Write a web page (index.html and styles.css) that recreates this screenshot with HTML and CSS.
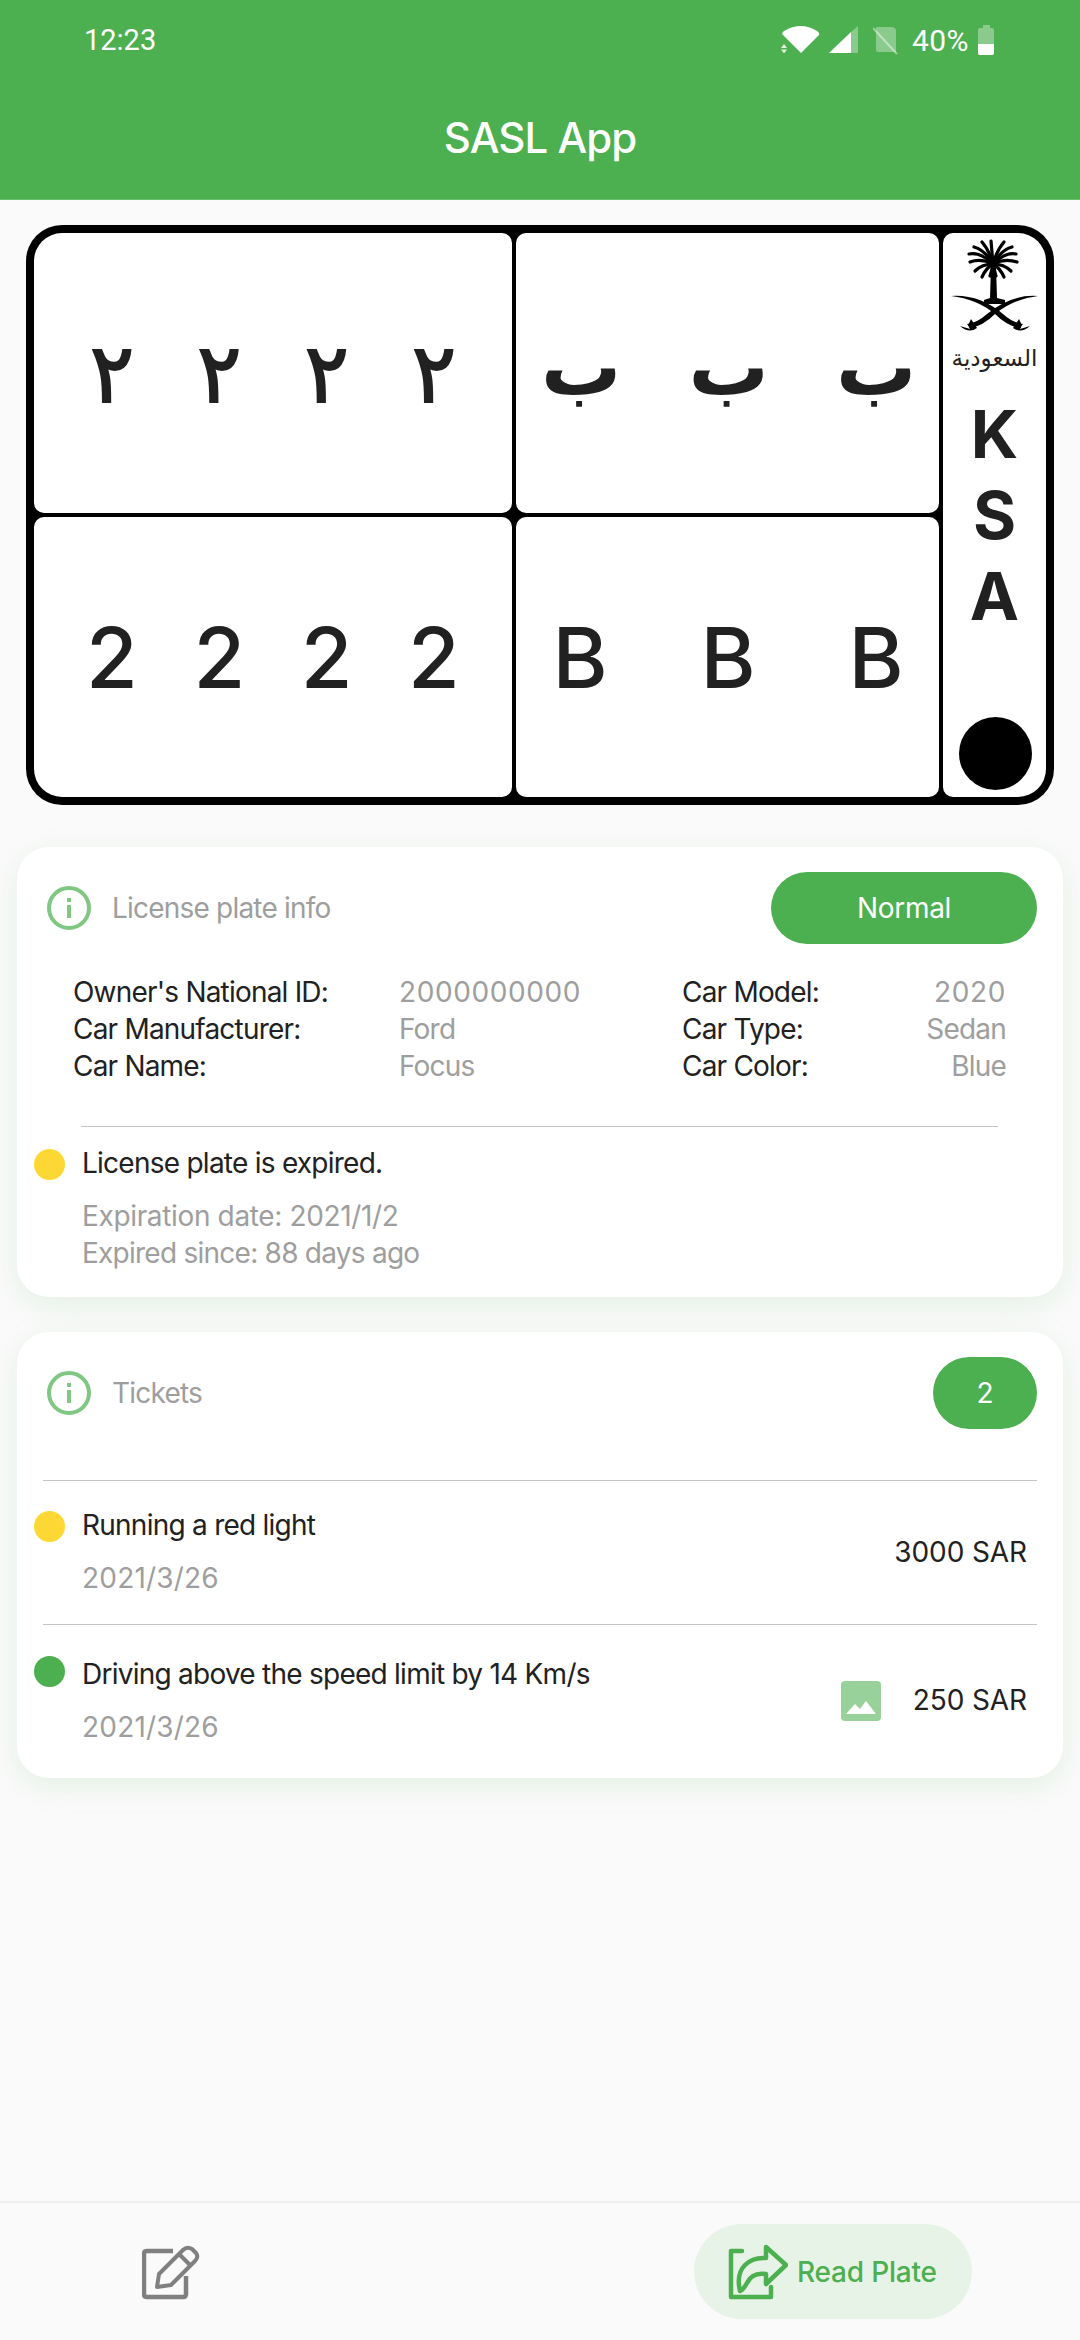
FILE: index.html

```html
<!DOCTYPE html>
<html lang="en">
<head>
  <meta charset="UTF-8">
  <title>SASL App</title>
  <link rel="stylesheet" href="styles.css">
</head>
<body>
  <div class="app">
    <header class="appbar">
      <div class="status">
        <span class="time">12:23</span>
        <div class="status-right">
          <svg class="st-wifi" width="40" height="30" viewBox="0 0 40 30">
            <path d="M20 28 L2 10 Q0 8 3 6 Q20 -4 36 6 Q39 8 38 10 Z" fill="#fff"/>
            <path d="M0 23 L3 19 L6 23 Z M0 24.500 L6 24.500 L3 28.500 Z" fill="#fff" opacity=".85"/>
          </svg>
          <svg class="st-signal" width="30" height="30" viewBox="0 0 30 30">
            <path d="M0 28 L22 7 L22 28 Z" fill="#fff"/>
            <path d="M22 7 L29 1 L29 28 L22 28 Z" fill="#fff" opacity=".35"/>
          </svg>
          <svg class="st-sim" width="26" height="30" viewBox="0 0 26 30">
            <path d="M3 2 L18 2 Q23 2 23 6 L23 27 L5 27 Q3 27 3 25 Z" fill="#fff" opacity=".35"/>
            <path d="M0 3 L24 29" stroke="#fff" stroke-width="2" opacity=".45"/>
          </svg>
          <span class="pct">40%</span>
          <div class="batt"><div class="batt-cap"></div><div class="batt-body"><div class="batt-level"></div></div></div>
        </div>
      </div>
      <h1 class="title">SASL App</h1>
    </header>

    <div class="plate">
      <div class="cell cell-num ar"><span>٢</span><span>٢</span><span>٢</span><span>٢</span></div>
      <div class="cell cell-let ar"><span>ب</span><span>ب</span><span>ب</span></div>
      <div class="side">
        <svg class="emblem" width="88" height="96" viewBox="0 0 88 96">
          <g stroke="#000" stroke-linecap="round" fill="none" stroke-width="3.200">
            <path d="M42 26 Q41 14 40 3"/>
            <path d="M42 26 Q38 12 31 4"/>
            <path d="M42 26 Q46 12 53 4"/>
            <path d="M42 26 Q34 12 23 9"/>
            <path d="M42 26 Q50 12 61 9"/>
            <path d="M42 26 Q30 14 18 16"/>
            <path d="M42 26 Q54 14 65 16"/>
            <path d="M42 26 Q30 20 19 24"/>
            <path d="M42 26 Q54 20 66 24"/>
            <path d="M42 26 Q31 26 24 33"/>
            <path d="M42 26 Q53 26 60 33"/>
            <path d="M42 26 Q35 30 31 39"/>
            <path d="M42 26 Q49 30 53 39"/>
            <path d="M42 26 Q41 32 39 38"/>
            <path d="M42 26 Q43 32 45 38"/>
          </g>
          <path d="M40 28 L45 28 L46 60 L54 62 L54 66 L33 66 L33 62 L39 60 Z" fill="#000"/>
          <path d="M0 58 Q28 56 52 76 Q62 85 72 86 L69 90 Q56 88 44 76 Q26 61 0 58 Z" fill="#000"/>
          <path d="M87 58 Q60 56 36 76 Q26 85 16 86 L19 90 Q32 88 44 76 Q62 61 87 58 Z" fill="#000"/>
          <path d="M68 81 Q72 88 69 91 L79 88 Q70 96 62 90 Z M20 81 Q16 88 19 91 L9 88 Q18 96 26 90 Z" fill="#000"/>
        </svg>
        <span class="saudi">السعودية</span>
        <div class="ksa"><span>K</span><span>S</span><span>A</span></div>
        <div class="dot-black"></div>
      </div>
      <div class="cell cell-num"><span>2</span><span>2</span><span>2</span><span>2</span></div>
      <div class="cell cell-let"><span>B</span><span>B</span><span>B</span></div>
    </div>

    <section class="card card-info">
      <div class="card-head">
        <svg class="info" width="46" height="46" viewBox="0 0 46 46">
          <circle cx="23" cy="23" r="20" fill="none" stroke="#81C784" stroke-width="4"/>
          <rect x="21" y="20" width="4" height="13" fill="#81C784"/>
          <rect x="21" y="13" width="4" height="4" fill="#81C784"/>
        </svg>
        <span class="head-label">License plate info</span>
        <span class="pill pill-normal">Normal</span>
      </div>
      <div class="details">
        <div class="col-left">
          <span class="k">Owner's National ID:</span><span class="v num">2000000000</span>
          <span class="k">Car Manufacturer:</span><span class="v">Ford</span>
          <span class="k">Car Name:</span><span class="v">Focus</span>
        </div>
        <div class="col-right">
          <span class="k">Car Model:</span><span class="v num">2020</span>
          <span class="k">Car Type:</span><span class="v">Sedan</span>
          <span class="k">Car Color:</span><span class="v">Blue</span>
        </div>
      </div>
      <div class="rule rule-info"></div>
      <div class="expired">
        <span class="dot yellow"></span>
        <div>
          <div class="main-txt">License plate is expired.</div>
          <div class="sub-txt exp-date">Expiration date: 2021/1/2</div>
          <div class="sub-txt exp-since">Expired since: 88 days ago</div>
        </div>
      </div>
    </section>

    <section class="card card-tickets">
      <div class="card-head">
        <svg class="info" width="46" height="46" viewBox="0 0 46 46">
          <circle cx="23" cy="23" r="20" fill="none" stroke="#81C784" stroke-width="4"/>
          <rect x="21" y="20" width="4" height="13" fill="#81C784"/>
          <rect x="21" y="13" width="4" height="4" fill="#81C784"/>
        </svg>
        <span class="head-label">Tickets</span>
        <span class="pill pill-count">2</span>
      </div>
      <div class="rule rule-t1"></div>
      <div class="ticket ticket-1">
        <span class="dot yellow"></span>
        <div class="ticket-txt">
          <div class="main-txt">Running a red light</div>
          <div class="sub-txt date">2021/3/26</div>
        </div>
        <span class="amount">3000 SAR</span>
      </div>
      <div class="rule rule-t2"></div>
      <div class="ticket ticket-2">
        <span class="dot green"></span>
        <div class="ticket-txt">
          <div class="main-txt">Driving above the speed limit by 14 Km/s</div>
          <div class="sub-txt date">2021/3/26</div>
        </div>
        <svg class="pic" width="40" height="40" viewBox="0 0 40 40">
          <rect width="40" height="40" rx="4" fill="#98D29A"/>
          <path d="M5 33 L14 23 L19 28 L25 20 L35 33 Z" fill="#fff"/>
        </svg>
        <span class="amount">250 SAR</span>
      </div>
    </section>

    <footer class="bottom">
      <svg class="edit" width="60" height="56" viewBox="0 0 60 56">
        <path d="M31 7 L5 7 Q2 7 2 10 L2 50 Q2 53 5 53 L41 53 Q44 53 44 50 L44 32" fill="none" stroke="#808080" stroke-width="4.500"/>
        <path d="M17 30 L41 6 Q45 2 50 5 L54 9 Q57 13 53 17 L29 41 L15 43 Z" fill="none" stroke="#808080" stroke-width="4" stroke-linejoin="round"/>
        <path d="M37 10 L49 22" stroke="#808080" stroke-width="4"/>
      </svg>
      <div class="read-btn">
        <svg class="share" width="60" height="56" viewBox="0 0 60 56">
          <path d="M14 7 L3 7 L3 53 L43 53 L43 43" fill="none" stroke="#4CAF50" stroke-width="4.500" stroke-linejoin="round" stroke-linecap="round"/>
          <path d="M38 3 L58 21 L38 40 L38 30 Q24 28 19 39 Q15 46 12 47 Q8 30 17 21 Q25 13 38 14 Z" fill="none" stroke="#4CAF50" stroke-width="4.500" stroke-linejoin="round"/>
        </svg>
        <span class="read-label">Read Plate</span>
      </div>
    </footer>
  </div>
</body>
</html>
```

FILE: styles.css

```css
* { box-sizing: border-box; }
html, body { margin: 0; padding: 0; }
body { font-family: Inter, "Noto Sans", sans-serif; background: #fafafa; color: #212121; }
.app { width: 1080px; height: 2340px; display: flex; flex-direction: column; overflow: hidden; }

/* header */
.appbar { height: 200px; background: #4caf50; border-bottom: 1px solid #6cbd6f; color: #fff; flex: none; }
.status { height: 80px; padding: 0 86px 0 84px; display: flex; align-items: center; justify-content: space-between; }
.time { font-family: Roboto, sans-serif; font-size: 29px; }
.status-right { display: flex; align-items: center; }
.st-signal { margin-left: 8px; }
.st-sim { margin-left: 14px; }
.pct { font-family: Roboto, sans-serif; font-size: 30px; letter-spacing: .4px; margin-left: 13px; }
.batt { margin-left: 9px; width: 16px; display: flex; flex-direction: column; align-items: center; }
.batt-cap { width: 7px; height: 3px; background: rgba(255,255,255,.35); }
.batt-body { width: 16px; height: 27px; border-radius: 2px; background: rgba(255,255,255,.35); display: flex; align-items: flex-end; overflow: hidden; }
.batt-level { width: 100%; height: 11px; background: #fff; }
.title { margin: 33px 0 0; text-align: center; font-size: 42px; font-weight: 500; line-height: 50px; letter-spacing: -1px; }

/* plate */
.plate { margin: 25px 26px 0; width: 1028px; height: 580px; flex: none; background: #000; border-radius: 36px; padding: 8px; display: grid; grid-template-columns: 478px 423px 103px; grid-template-rows: 280px 280px; gap: 4px; }
.cell { background: #fff; border-radius: 10px; display: flex; align-items: center; justify-content: space-between; font-size: 84px; font-weight: 500; color: #212121; }
.cell span { width: 60px; text-align: center; }
.cell-num { padding: 0 48px; }
.cell-let { padding: 0 33px 0 34px; }
.plate > .cell:nth-child(1) { border-top-left-radius: 28px; }
.plate > .cell:nth-child(4) { border-bottom-left-radius: 28px; }
.ar { font-family: "DejaVu Sans", sans-serif; }
.cell-num.ar { font-size: 82px; font-weight: 400; -webkit-text-stroke: 2px #212121; }
.cell-let.ar { font-size: 80px; font-weight: 700; padding: 0 43px 12px 25px; }
.side { grid-column: 3; grid-row: 1 / 3; background: #fff; border-radius: 10px 28px 28px 10px; display: flex; flex-direction: column; align-items: center; padding-top: 5px; position: relative; }
.emblem { flex: none; }
.saudi { font-family: "DejaVu Sans", sans-serif; font-size: 23px; line-height: 30px; margin-top: 9px; color: #212121; }
.ksa { display: flex; flex-direction: column; align-items: center; font-size: 66px; font-weight: 700; line-height: 81px; margin-top: 21px; }
.dot-black { position: absolute; bottom: 7px; left: 16px; width: 73px; height: 73px; border-radius: 50%; background: #000; }
.plate > .cell:nth-child(4) { grid-column: 1; grid-row: 2; }
.plate > .cell:nth-child(5) { grid-column: 2; grid-row: 2; }

/* cards */
.card { margin-left: 17px; width: 1046px; background: #fff; border-radius: 32px; box-shadow: 0 8px 30px rgba(76,175,80,.12); flex: none; position: relative; }
.card-info { margin-top: 42px; height: 450px; }
.card-tickets { margin-top: 35px; height: 446px; }
.card-head { height: 72px; padding: 0 26px 0 29px; display: flex; align-items: center; position: relative; top: 25px; }
.head-label { margin-left: 20px; font-size: 28px; color: #9e9e9e; letter-spacing: -.8px; }
.pill { margin-left: auto; height: 72px; border-radius: 36px; background: #4caf50; color: #fff; font-size: 28px; display: flex; align-items: center; justify-content: center; letter-spacing: -.3px; }
.pill-normal { width: 266px; }
.pill-count { width: 104px; }

.details { display: flex; justify-content: space-between; padding: 0 57px 0 56px; margin-top: 55px; }
.col-left { display: grid; grid-template-columns: 326px auto; }
.col-right { display: grid; grid-template-columns: 180px 144px; }
.col-right .v { text-align: right; }
.k, .v { font-size: 28px; line-height: 37px; letter-spacing: -.8px; }
.k { color: #212121; }
.v { color: #9e9e9e; }
.v.num { letter-spacing: .6px; }

.rule { height: 1px; background: #c4c4c4; }
.rule-info { margin: 41px 65px 0 64px; }
.expired { display: flex; margin-top: 18px; padding-left: 17px; }
.dot { width: 31px; height: 31px; border-radius: 50%; flex: none; margin-right: 17px; margin-top: 4px; }
.ticket-2 .dot { margin-top: 0; }
.yellow { background: #fdd835; }
.green { background: #4caf50; }
.main-txt { font-size: 28px; line-height: 37px; letter-spacing: -.75px; color: #212121; }
.sub-txt { font-size: 28px; line-height: 37px; color: #9e9e9e; }
.exp-date { margin-top: 16px; letter-spacing: -.35px; }
.exp-since { letter-spacing: -.75px; }

.rule-t1 { margin: 76px 26px 0 26px; }
.rule-t2 { margin: 0 26px; }
.ticket { display: flex; align-items: flex-start; padding-left: 17px; }
.ticket-1 { height: 143px; padding-top: 26px; }
.ticket-2 { height: 150px; padding-top: 31px; }
.ticket-txt { flex: 1; }
.sub-txt.date { margin-top: 16px; letter-spacing: .2px; }
.amount { font-size: 28px; line-height: 37px; letter-spacing: -.1px; margin-right: 36px; }
.ticket-1 .amount { margin-top: 27px; }
.ticket-2 .amount { margin-top: 26px; }
.pic { margin-top: 25px; margin-right: 32px; flex: none; }

/* bottom bar */
.bottom { margin-top: auto; height: 139px; flex: none; border-top: 2px solid #eeeeee; display: flex; align-items: center; justify-content: space-between; padding: 0 108px 0 142px; }
.read-btn { width: 278px; height: 95px; border-radius: 48px; background: #e8f3e8; display: flex; align-items: center; padding-left: 34px; }
.read-label { margin-left: 9px; color: #4caf50; font-size: 28px; font-weight: 500; letter-spacing: -.2px; }
```
